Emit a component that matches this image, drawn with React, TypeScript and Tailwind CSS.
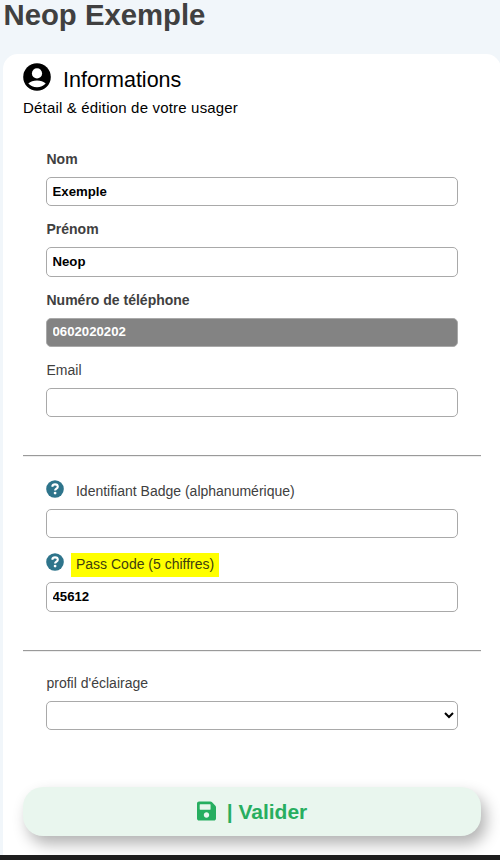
import type { ReactNode } from "react";
import { FaSave } from "react-icons/fa";

const UserIcon = ({ className }: { className: string }) => (
  <svg viewBox="0 0 28 28" className={className} aria-hidden="true">
    <circle cx="14" cy="14" r="13.8" fill="#000" />
    <circle cx="14" cy="10.4" r="5.1" fill="#fff" />
    <path d="M5.3 20.6C7.4 18.4 10.5 17.4 14 17.4s6.600 1 8.700 3.200C20.600 23 17.500 24.200 14 24.200s-6.600-1.200-8.700-3.600z" fill="#fff" />
  </svg>
);

const HelpIcon = ({ className }: { className: string }) => (
  <svg viewBox="0 0 18 18" className={className} aria-hidden="true">
    <circle cx="9" cy="9" r="8.8" fill="#2e748b" />
    <path d="M6.200 6.700C6.500 5.100 7.500 4.400 9 4.400c1.600 0 2.800.9 2.800 2.300 0 2-2.700 1.900-2.700 3.900" fill="none" stroke="#fff" strokeWidth="2.100" />
    <circle cx="9.100" cy="13.100" r="1.400" fill="#fff" />
  </svg>
);

type FieldProps = {
  label: string;
  value?: string;
  bold?: boolean;
  disabled?: boolean;
  className?: string;
};

const Field = ({ label, value = "", bold, disabled, className = "h-[29px]" }: FieldProps) => (
  <label className="block">
    <span className={`block pl-[0.5px] text-sm/5 text-[#404040] ${bold ? "font-bold" : ""}`}>{label}</span>
    <input
      type="text"
      defaultValue={value}
      disabled={disabled}
      className={`mt-2 block w-full rounded-[5px] border border-[#a9a9a9] px-[5.5px] text-[13.2px] font-bold ${
        disabled ? "bg-[#838383] pb-[3px] text-white" : "bg-white pb-px text-black"
      } ${className}`}
    />
  </label>
);

type HelpFieldProps = {
  label: ReactNode;
  value?: string;
  className: string;
};

const HelpField = ({ label, value = "", className }: HelpFieldProps) => (
  <div>
    <div className="flex h-6">
      <HelpIcon className="ml-[0.3px] size-[18px] shrink-0" />
      {label}
    </div>
    <input
      type="text"
      defaultValue={value}
      className={`block w-full rounded-[5px] border border-[#a9a9a9] bg-white px-[5.5px] pb-px text-[13.2px] font-bold text-black ${className}`}
    />
  </div>
);

const Divider = () => <hr className="h-[2px] border-t border-b border-t-[#9a9a9a] border-b-[#eeeeee]" />;

const App = () => {
  return (
    <div className="flex h-[860px] w-[500px] flex-col overflow-hidden bg-[#f1f6fa] font-['Liberation_Sans',Arial,sans-serif]">
      <h1 className="h-[54px] pl-[3.5px] text-[29.3px]/[30px] font-bold text-[#404040]">Neop Exemple</h1>

      <main className="ml-[3px] h-[801px] w-[498px] shrink-0 overflow-hidden rounded-t-[15px] bg-white px-5">
        {/* Card header */}
        <div className="flex h-[43px] pt-[6px]">
          <UserIcon className="mt-[2.5px] size-[28px] shrink-0" />
          <h2 className="ml-[12px] pt-[7px] text-[21.5px]/[26px]">Informations</h2>
        </div>
        <p className="pt-px text-[15px]/[20px] tracking-[0.18px]">Détail &amp; édition de votre usager</p>

        {/* Identity */}
        <div className="flex w-[435px] flex-col pt-[31px] pl-[23px]">
          <Field label="Nom" value="Exemple" bold />
          <div className="mt-[13px]">
            <Field label="Prénom" value="Neop" bold className="h-[30px]" />
          </div>
          <div className="mt-[13px]">
            <Field label="Numéro de téléphone" value="0602020202" bold disabled />
          </div>
          <div className="mt-[13px]">
            <Field label="Email" />
          </div>
        </div>

        <div className="pt-[38px]">
          <Divider />
        </div>

        {/* Access */}
        <div className="flex w-[435px] flex-col pt-[23px] pl-[23px]">
          <HelpField
            label={<span className="ml-[11.700px] pt-px text-sm/5 text-[#404040]">Identifiant Badge (alphanumérique)</span>}
            className="mt-[5px] h-[29px]"
          />
          <div className="mt-[15px]">
            <HelpField
              label={
                <span className="ml-[6.700px] h-6 bg-[#ffff00] px-[5px] pt-px text-sm/5 text-[#404010]">
                  Pass Code (5 chiffres)
                </span>
              }
              value="45612"
              className="mt-[5px] h-[30px]"
            />
          </div>
        </div>

        <div className="pt-[38px]">
          <Divider />
        </div>

        {/* Lighting profile */}
        <label className="block w-[435px] pt-[21px] pl-[23px]">
          <span className="block pl-[0.5px] text-sm/5 text-[#404040]">profil d'éclairage</span>
          <select className="mt-2 block h-[29px] w-full rounded-[5px] border border-[#a9a9a9] bg-white pr-px text-[13.33px] text-black">
            <option></option>
          </select>
        </label>

        <button className="mt-[57px] flex h-[49px] w-[458px] items-center justify-center rounded-[20px] bg-[#e9f6ee] text-[21px] font-bold text-[#27ae60] shadow-[5px_8px_15px_rgba(0,0,0,0.3)]">
          <FaSave className="mr-[11px] mb-px h-[22px] w-[19px]" />
          <span>| Valider</span>
        </button>
      </main>

      <div className="h-[5px] shrink-0 bg-[#1e1e1e]" />
    </div>
  );
};

export default App;
